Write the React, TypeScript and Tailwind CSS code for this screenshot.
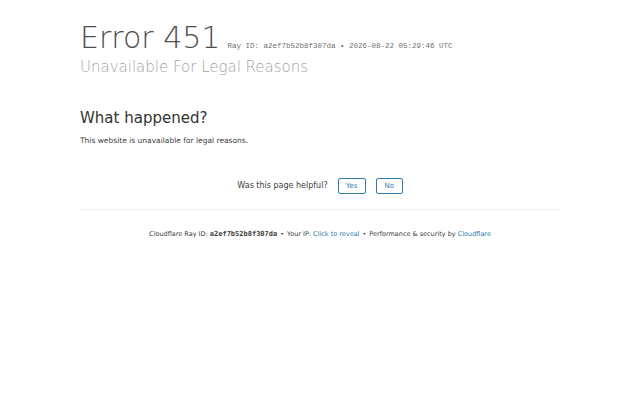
import React from 'react';

const sans = { fontFamily: '"DejaVu Sans", sans-serif' };

export default function App() {
    return (
        <div className="w-full min-h-[400px] bg-white text-[#404040]" style={sans}>
            <div className="w-3/4 mx-auto pt-5">
                <header className="mb-[30px]">
                    <h1 className="flex items-baseline gap-[7px] leading-[36px]">
                        <span className="text-[30px] font-extralight text-[#4d4d4d]">Error 451</span>
                        <span className="text-[7.5px] text-[#707070] font-['Liberation_Mono',monospace]">
                            Ray ID: a2ef7b52b8f307da &bull; 2026-08-22 05:29:46 UTC
                        </span>
                    </h1>
                    <h2 className="-mt-[8px] text-[15px] font-extralight text-[#a3a3a3] leading-[22px]">Unavailable For Legal Reasons</h2>
                </header>

                <section className="-mt-[1px] mb-[31px]">
                    <h2 className="text-[15px] leading-[22px] text-[#333] mb-[6px]">What happened?</h2>
                    <p className="text-[7.5px] leading-[12px] text-[#404040]">This website is unavailable for legal reasons.</p>
                </section>

                <div className="flex items-center justify-center gap-[10px] pb-[15px] border-b border-[#eee]">
                    <span className="text-[8px] text-[#404040]">Was this page helpful?</span>
                    <button className="h-[16px] w-[28px] border border-[#2c7cb0] rounded-[2px] text-[7px] text-[#2c7cb0]">Yes</button>
                    <button className="h-[16px] w-[27px] border border-[#2c7cb0] rounded-[2px] text-[7px] text-[#2c7cb0]">No</button>
                </div>

                <footer className="pt-[19px] text-center text-[6.5px] text-[#404040]">
                    Cloudflare Ray ID: <strong className="text-[7px] font-bold font-['DejaVu_Sans_Mono',monospace]">a2ef7b52b8f307da</strong>
                    <span className="mx-[3px]">&bull;</span>
                    Your IP: <span className="text-[#2c7cb0]">Click to reveal</span>
                    <span className="mx-[3px]">&bull;</span>
                    Performance &amp; security by <span className="text-[#2c7cb0]">Cloudflare</span>
                </footer>
            </div>
        </div>
    );
}
